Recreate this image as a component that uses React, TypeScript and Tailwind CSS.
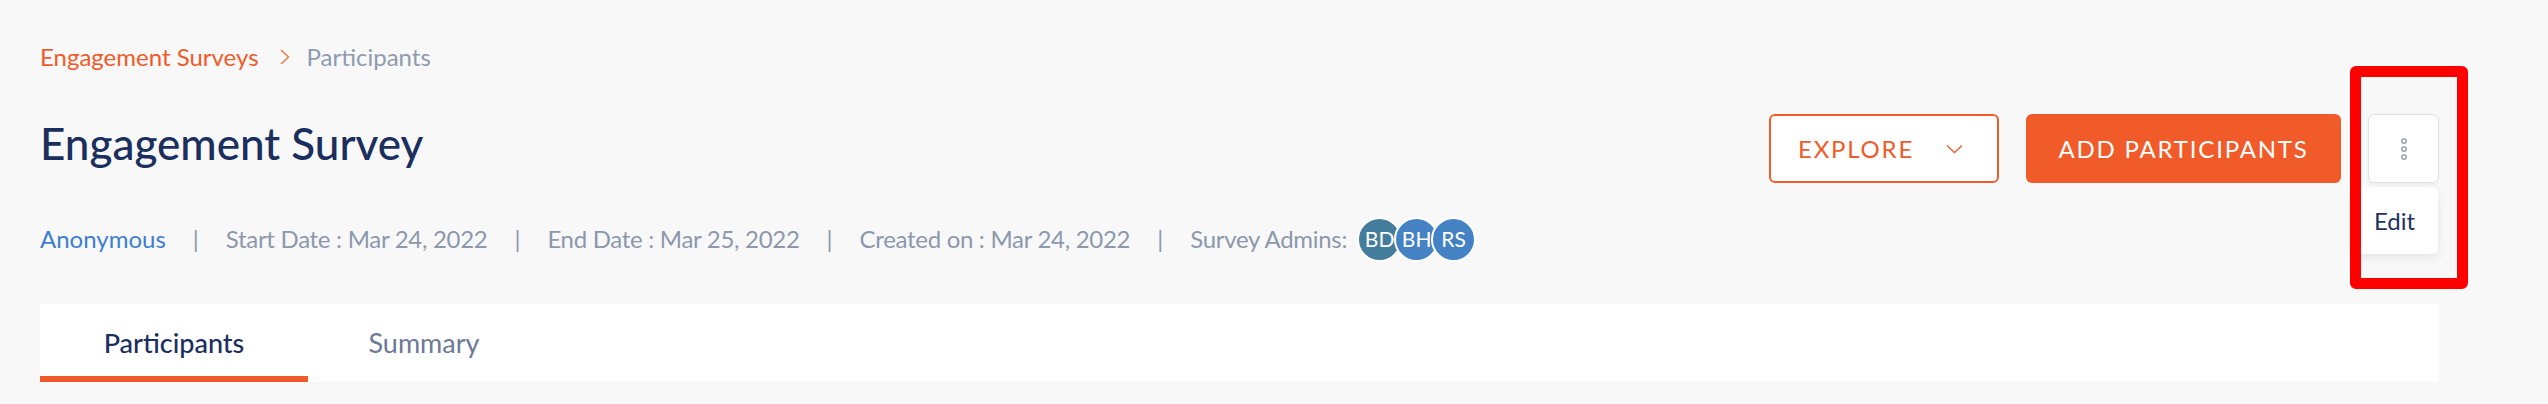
import React from 'react'

const admins = [
  { initials: 'BD', color: 'bg-[#437d9b]' },
  { initials: 'BH', color: 'bg-[#4482c4]' },
  { initials: 'RS', color: 'bg-[#4482c4]' },
]

function MetaSep() {
  return <span className="mx-[27px] text-[#8c98ad]">|</span>
}

export default function App() {
  return (
    <div
      className="relative h-[404px] w-[2548px] overflow-hidden bg-[#f8f8f8]"
      style={{ fontFamily: 'Lato, "Open Sans", sans-serif' }}
    >
      <div className="w-[2439px] pl-[40px] pt-[44px]">
        {/* Breadcrumb */}
        <div className="flex items-center text-[24px] leading-[26px]">
          <span className="text-[#f15b2a]">Engagement Surveys</span>
          <svg className="ml-[21px] mr-[17px]" width="10" height="16" viewBox="0 0 10 16" fill="none">
            <path d="M1 1l7.5 7L1 15" stroke="#f26b3a" strokeWidth="1.3" />
          </svg>
          <span className="text-[#8e9bb0]">Participants</span>
        </div>

        {/* Title row */}
        <div className="mt-[44px] flex h-[69px] items-center justify-between">
          <h1 className="pb-[12px] text-[44px] font-medium leading-none text-[#1b2f5e]">Engagement Survey</h1>
          <div className="flex items-center gap-[27px]">
            <button className="flex h-[69px] w-[230px] items-center rounded-[6px] border-2 border-[#f15b2a] bg-white pl-[27px] text-[24px] tracking-[1.8px] text-[#f15b2a]">
              EXPLORE
              <svg className="ml-[32px]" width="17" height="10" viewBox="0 0 17 10" fill="none">
                <path d="M1 1.5l7.5 7 7.5-7" stroke="#f15b2a" strokeWidth="1.3" />
              </svg>
            </button>
            <button className="flex h-[69px] w-[315px] items-center justify-center rounded-[6px] bg-[#f15b2a] text-[24px] tracking-[1.8px] text-white">
              ADD PARTICIPANTS
            </button>
            <div className="relative">
              <button className="flex h-[69px] w-[71px] items-center justify-center rounded-[6px] border border-[#dde0e5] bg-white shadow-[0_2px_3px_rgba(0,0,0,0.04)]">
                <svg width="8" height="24" viewBox="0 0 8 24" fill="none">
                  <circle cx="4" cy="4" r="2.2" stroke="#8b95a8" strokeWidth="1.3" />
                  <circle cx="4" cy="12" r="2.2" stroke="#8b95a8" strokeWidth="1.3" />
                  <circle cx="4" cy="20" r="2.2" stroke="#8b95a8" strokeWidth="1.3" />
                </svg>
              </button>
              <div className="absolute right-[1px] top-[73px] flex h-[67px] w-[84px] items-center rounded-[6px] bg-white pl-[20px] text-[24px] text-[#1d3461] shadow-[0_4px_10px_rgba(0,0,0,0.08)]">
                Edit
              </div>
            </div>
          </div>
        </div>

        {/* Meta row */}
        <div className="mt-[33px] flex h-[46px] items-center text-[24px] text-[#8c98ad]">
          <span className="text-[#3d7fd0]">Anonymous</span>
          <MetaSep />
          <span className="tracking-[-0.3px]">Start Date : Mar 24, 2022</span>
          <MetaSep />
          <span className="tracking-[-0.3px]">End Date : Mar 25, 2022</span>
          <MetaSep />
          <span className="tracking-[-0.3px]">Created on : Mar 24, 2022</span>
          <MetaSep />
          <span className="tracking-[-0.3px]">Survey Admins:</span>
          <div className="ml-[10px] flex">
            {admins.map((a, i) => (
              <div
                key={a.initials}
                className={`flex h-[45px] w-[45px] items-center justify-center rounded-full border-2 border-white text-[21px] text-white ${a.color} ${i > 0 ? '-ml-[8px]' : ''}`}
              >
                {a.initials}
              </div>
            ))}
          </div>
        </div>

        {/* Tabs */}
        <div className="mt-[42px] flex h-[78px] bg-white">
          <div className="flex w-[268px] items-center justify-center border-b-[6px] border-[#f15b2a] pt-[6px] text-[27px] font-medium text-[#1b2f5e]">
            Participants
          </div>
          <div className="flex w-[232px] items-center justify-center text-[27px] text-[#6c7a96]">
            Summary
          </div>
        </div>
      </div>

      {/* annotation box */}
      <div className="pointer-events-none absolute left-[2350px] top-[66px] h-[223px] w-[118px] rounded-[6px] border-[11px] border-[#ff0000]" />
    </div>
  )
}
